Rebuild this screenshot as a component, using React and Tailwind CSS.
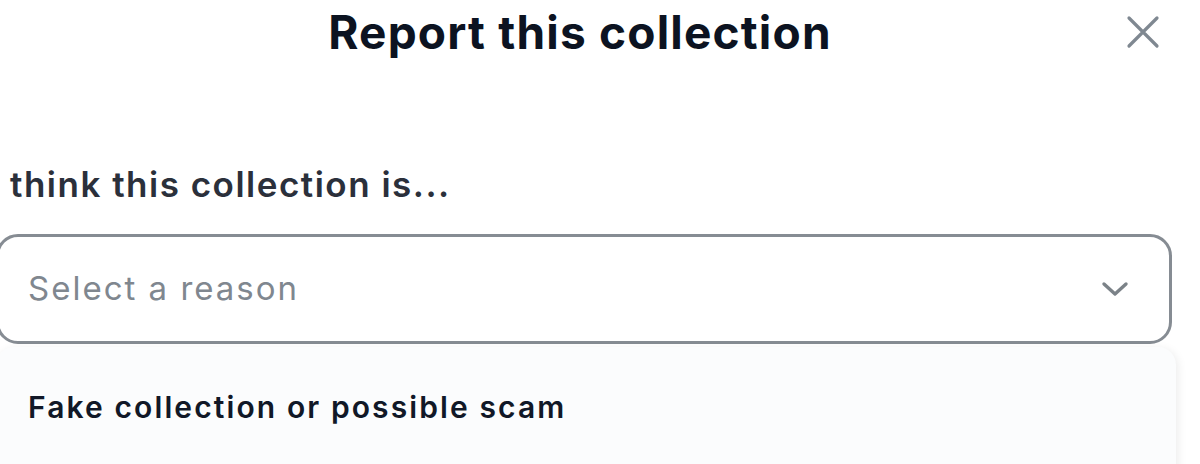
import React from 'react';

// Закрыть модалку
const CloseIcon = () => (
  <svg width="34" height="34" viewBox="0 0 34 34" fill="none" stroke="#7f8891" strokeWidth="3.2" strokeLinecap="round">
    <path d="M3 3L31 31M31 3L3 31" />
  </svg>
);

const Chevron = () => (
  <svg width="28" height="16" viewBox="0 0 28 16" fill="none" stroke="#7b8288" strokeWidth="3.4" strokeLinecap="round" strokeLinejoin="round">
    <path d="M3 3L14 13L25 3" />
  </svg>
);

export default function App() {
  return (
    <div className="w-[1200px] h-[464px] overflow-hidden bg-white font-['Inter',sans-serif]">
      {/* Заголовок */}
      <div className="flex items-center h-[64px] pr-[40px]">
        <h1 className="flex-1 text-center pl-[34px] text-[46px] font-bold text-[#0c1321] tracking-[1.2px]">
          Report this collection
        </h1>
        <button className="flex items-center justify-center">
          <CloseIcon />
        </button>
      </div>

      <div className="pt-[100px] pr-[28px]">
        <div className="pl-[10px] text-[35px] font-semibold text-[#2b303b] leading-[40px] tracking-[1.5px]">
          think this collection is...
        </div>

        <div className="mt-[30px] ml-[-4px] h-[110px] border-[3px] border-[#868c93] rounded-[22px] bg-white flex items-center justify-between pl-[29px] pr-[40px]">
          <span className="text-[33px] text-[#80878f] font-normal tracking-[2px]">Select a reason</span>
          <Chevron />
        </div>

        <div className="mt-[3px] ml-[-4px] mr-[-4px] h-[200px] rounded-[18px] bg-[#fbfcfd] shadow-[2px_2px_10px_rgba(0,0,0,0.08)] pt-[38px]">
          <div className="pl-[32px] text-[30px] font-semibold text-[#111827] tracking-[2.1px]">
            Fake collection or possible scam
          </div>
        </div>
      </div>
    </div>
  );
}
